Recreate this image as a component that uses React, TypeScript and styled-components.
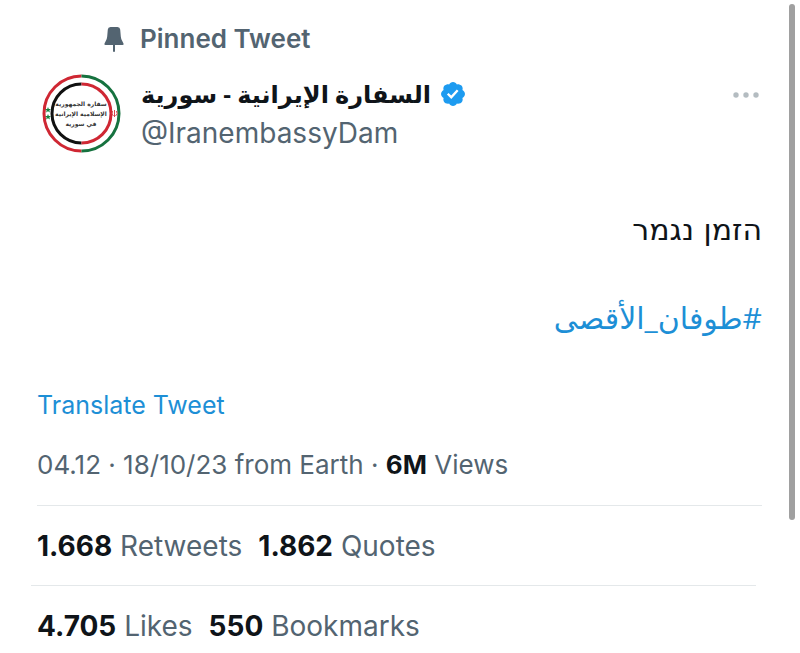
import React from "react";
import styled, { createGlobalStyle } from "styled-components";

const Global = createGlobalStyle`
  *, *::before, *::after { box-sizing: border-box; }
  body {
    margin: 0;
    background: #fff;
    color: #0f1419;
    font-family: Inter, "DejaVu Sans", sans-serif;
    font-size: 26px;
  }
`;

const Page = styled.main`
  display: flex;
  align-items: flex-start;
`;

const Tweet = styled.article`
  flex: 1;
  min-width: 0;
  padding: 20px 27px 0 37px;
`;

const ScrollThumb = styled.div`
  flex: none;
  width: 6px;
  height: 79vh;
  margin: 4px 5px 0 0;
  border-radius: 3px;
  background: #a0a0a0;
`;

const Pinned = styled.div`
  display: flex;
  align-items: center;
  gap: 16px;
  padding-left: 67px;
  line-height: 38px;
  font-weight: 600;
  color: #536471;
`;

const PinIcon = styled.svg`
  flex: none;
  width: 20px;
  height: 26px;
`;

const Header = styled.header`
  display: flex;
  gap: 20px;
  padding: 16px 0 0 5px;
`;

const Avatar = styled.svg`
  flex: none;
  width: 79px;
  height: 79px;
`;

const AvatarText = styled.text`
  font-family: "DejaVu Sans", sans-serif;
  font-size: 6px;
  font-weight: 700;
  fill: #333;
  text-anchor: middle;
`;

const Names = styled.div`
  flex: 1;
  min-width: 0;
`;

const NameRow = styled.div`
  display: flex;
  align-items: center;
  gap: 8px;
  height: 40px;
`;

const Name = styled.h1`
  margin: 0;
  font-family: "Open Sans", "DejaVu Sans", sans-serif;
  font-size: 24px;
  font-weight: 700;
  line-height: 40px;
  white-space: nowrap;
`;

const Badge = styled.svg`
  flex: none;
  width: 28px;
  height: 28px;
`;

const Handle = styled.a`
  display: block;
  font-size: 28px;
  line-height: 38px;
  color: #536471;
  text-decoration: none;
`;

const MoreButton = styled.button`
  display: flex;
  align-items: center;
  align-self: flex-start;
  height: 42px;
  padding: 0 3px;
  border: 0;
  background: none;
`;

const Body = styled.div`
  display: grid;
  gap: 44px;
  padding-top: 55px;
  direction: rtl;
  font-family: "DejaVu Sans", sans-serif;
  font-size: 30px;
  line-height: 44px;
`;

const Paragraph = styled.p`
  margin: 0;
`;

const Hashtag = styled.a`
  font-family: "Open Sans", "DejaVu Sans", sans-serif;
  color: #1d8fd6;
  text-decoration: none;
`;

const TranslateButton = styled.button`
  display: block;
  margin-top: 44px;
  padding: 0;
  border: 0;
  background: none;
  font: inherit;
  font-size: 25px;
  line-height: 40px;
  color: #1d8fd6;
`;

const Meta = styled.p`
  margin: 0;
  padding: 20px 0;
  line-height: 40px;
  color: #536471;
`;

const Stats = styled.div`
  display: flex;
  gap: 16px;
  padding-top: 20px;
  font-size: 28px;
  line-height: 40px;
  color: #536471;
`;

const Rule = styled.hr<{ $outdent?: boolean }>`
  height: 1px;
  margin: ${(p) => (p.$outdent ? "19px 6px 0 -6px" : "0")};
  border: 0;
  background: #e4e8ea;
`;

const Strong = styled.strong`
  font-weight: 700;
  color: #0f1419;
`;

const STAR = "M0-3l.8 2h2.200l-1.700 1.400.7 2.200L0 1.300l-2 1.300.7-2.200L-3-1h2.200z";

const stats = [
  [
    ["1.668", "Retweets"],
    ["1.862", "Quotes"],
  ],
  [
    ["4.705", "Likes"],
    ["550", "Bookmarks"],
  ],
];

export default function App() {
  return (
    <>
      <Global />
      <Page>
        <Tweet>
          <Pinned>
            <PinIcon viewBox="0 0 20 26" aria-hidden="true">
              <path
                d="M6.500 1h7q2.500 0 2.700 2.500l.6 7q.2 2 1.200 4l1.500 3q.5 1.500-1 1.500h-17q-1.500 0-1-1.500l1.500-3q1-2 1.200-4l.6-7Q4 1 6.500 1z"
                fill="#536471"
              />
              <path d="M10 18v7" stroke="#536471" strokeWidth="2" strokeLinecap="round" />
            </PinIcon>
            <span>Pinned Tweet</span>
          </Pinned>
          <Header>
            <Avatar viewBox="0 0 79 79" role="img" aria-label="Embassy emblem">
              <g fill="none" strokeWidth="3">
                <path d="M39.500 2a37.500 37.500 0 0 0 0 75" stroke="#cf2733" />
                <path d="M39.500 2a37.500 37.500 0 0 1 0 75" stroke="#16723f" />
                <path d="M39.500 10a29.500 29.500 0 0 0 0 59" stroke="#111" />
                <path d="M39.500 10a29.500 29.500 0 0 1 0 59" stroke="#cf2733" />
              </g>
              <path d={STAR} fill="#16803f" transform="translate(6 36)" />
              <path d={STAR} fill="#16803f" transform="translate(6 43)" />
              <g fill="none" stroke="#d8434c" strokeWidth="1">
                <path d="M72.500 36v7M70.500 37q-2 3 1 5M74.500 37q2 3-1 5" />
              </g>
              <AvatarText x="39" y="32" direction="rtl">سفارة الجمهورية</AvatarText>
              <AvatarText x="39" y="42" direction="rtl">الإسلامية الإيرانية</AvatarText>
              <AvatarText x="39" y="52" direction="rtl">في سورية</AvatarText>
            </Avatar>
            <Names>
              <NameRow>
                <Name dir="rtl">السفارة الإيرانية - سورية</Name>
                <Badge viewBox="0 0 22 22" role="img" aria-label="Verified account">
                  <path
                    fill="#1d9bf0"
                    d="M20.396 11c-.018-.646-.215-1.275-.57-1.816-.354-.54-.852-.972-1.438-1.246.223-.607.27-1.264.14-1.897-.131-.634-.437-1.218-.882-1.687-.47-.445-1.053-.75-1.687-.882-.633-.13-1.290-.083-1.897.14-.273-.587-.704-1.086-1.245-1.440S11.647 1.620 11 1.604c-.646.017-1.273.213-1.813.568s-.969.854-1.240 1.440c-.608-.223-1.267-.272-1.902-.14-.635.130-1.220.436-1.690.882-.445.470-.749 1.055-.878 1.688-.130.633-.080 1.290.144 1.896-.587.274-1.087.705-1.443 1.245-.356.540-.555 1.170-.574 1.817.020.647.218 1.276.574 1.817.356.540.856.972 1.443 1.245-.224.606-.274 1.263-.144 1.896.130.634.433 1.218.877 1.688.470.443 1.054.747 1.687.878.633.132 1.290.084 1.897-.136.274.586.705 1.084 1.246 1.439.540.354 1.170.551 1.816.569.647-.016 1.276-.213 1.817-.567s.972-.854 1.245-1.440c.604.239 1.266.296 1.903.164.636-.132 1.220-.447 1.680-.907.460-.460.776-1.044.908-1.681s.075-1.299-.165-1.903c.586-.274 1.084-.705 1.439-1.246.354-.540.551-1.170.569-1.816zM9.662 14.850l-3.429-3.428 1.293-1.302 2.072 2.072 4.400-4.794 1.347 1.246z"
                  />
                </Badge>
              </NameRow>
              <Handle href="#">@IranembassyDam</Handle>
            </Names>
            <MoreButton aria-label="More">
              <svg width="26" height="6" viewBox="0 0 26 6" fill="#b4bcc1">
                <circle cx="3" cy="3" r="2.700" />
                <circle cx="13" cy="3" r="2.700" />
                <circle cx="23" cy="3" r="2.700" />
              </svg>
            </MoreButton>
          </Header>
          <Body>
            <Paragraph lang="he">הזמן נגמר</Paragraph>
            <Paragraph lang="ar">
              <Hashtag href="#">#طوفان_الأقصى</Hashtag>
            </Paragraph>
          </Body>
          <TranslateButton>Translate Tweet</TranslateButton>
          <Meta>
            04.12 · 18/10/23 from Earth · <Strong>6M</Strong> Views
          </Meta>
          {stats.map((row, i) => (
            <React.Fragment key={i}>
              <Rule $outdent={i > 0} />
              <Stats>
                {row.map(([count, label]) => (
                  <span key={label}>
                    <Strong>{count}</Strong> {label}
                  </span>
                ))}
              </Stats>
            </React.Fragment>
          ))}
        </Tweet>
        <ScrollThumb />
      </Page>
    </>
  );
}
